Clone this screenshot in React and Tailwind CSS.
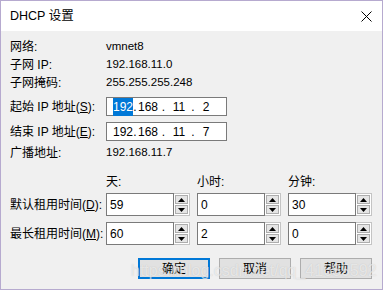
const font = { fontFamily: '"Liberation Sans", "Noto Sans CJK SC", sans-serif' };

const Arrow = ({ up }) => (
  <svg width="7" height="4" viewBox="0 0 7 4">
    <polygon points={up ? "3.5,0 7,4 0,4" : "0,0 7,0 3.5,4"} fill="#000" />
  </svg>
);

const SpinBox = ({ value }) => (
  <div className="flex h-full w-[84px]">
    <div className="flex h-full w-[68px] items-center border border-[#7a7a7a] bg-white pl-[3px] text-[12px]">
      {value}
    </div>
    <div className="flex h-full w-[16px] flex-col border border-l-0 border-[#c4c4c4] bg-white p-[1px] gap-[1px]">
      <div className="flex flex-1 items-center justify-center border border-[#adadad] bg-[#e5e5e5]">
        <Arrow up />
      </div>
      <div className="flex flex-1 items-center justify-center border border-[#adadad] bg-[#e5e5e5]">
        <Arrow />
      </div>
    </div>
  </div>
);

const Label = ({ children }) => (
  <div className="w-[96px] shrink-0 text-[12px] text-black">{children}</div>
);

const InfoRow = ({ label, value, className = "" }) => (
  <div className={`flex h-[18px] items-center ${className}`}>
    <Label>{label}</Label>
    <span className="text-[11.5px]">{value}</span>
  </div>
);

const IpBox = ({ parts, selected }) => (
  <div className="flex h-full w-[121px] shrink-0 items-center border border-[#7a7a7a] bg-white pl-[6px] text-[12px]">
    <span className={`w-[20px] text-center ${selected ? "bg-[#0078d7] text-white" : ""}`}>
      {parts[0]}
    </span>
    <span className="w-[4px] text-center">.</span>
    <span className="w-[22px] text-center">{parts[1]}</span>
    <span className="w-[9px] text-center">.</span>
    <span className="w-[22px] text-center">{parts[2]}</span>
    <span className="w-[6px] text-center">.</span>
    <span className="w-[20px] text-center">{parts[3]}</span>
  </div>
);

const Button = ({ children, focused }) => (
  <div
    className={`flex h-[21px] w-[72px] items-center justify-center bg-[#e1e1e1] text-[12px] ${
      focused ? "border-2 border-[#0078d7]" : "border border-[#adadad]"
    }`}
  >
    {children}
  </div>
);

export default function App() {
  return (
    <div
      className="relative flex h-[290px] w-[383px] flex-col border border-[#b6aacf] bg-[#f0f0f0] text-black"
      style={font}
    >
      {/* Title bar */}
      <div className="flex h-[30px] shrink-0 items-center justify-between bg-white pl-[9px] pr-[9px]">
        <span className="text-[12.5px]">DHCP 设置</span>
        <svg width="11" height="11" viewBox="0 0 11 11" className="mr-[1px]">
          <path d="M0.5 0.5 L10.5 10.5 M10.5 0.5 L0.5 10.5" stroke="#000" strokeWidth="1" />
        </svg>
      </div>

      {/* Body */}
      <div className="flex flex-1 flex-col pl-[9px] pt-[7px]">
        <InfoRow label="网络:" value="vmnet8" />
        <InfoRow label="子网 IP:" value="192.168.11.0" />
        <InfoRow label="子网掩码:" value="255.255.255.248" />

        <div className="mt-[5px] flex h-[19px] items-center">
          <Label>
            起始 IP 地址(<u>S</u>):
          </Label>
          <IpBox parts={["192", "168", "11", "2"]} selected />
        </div>
        <div className="mt-[6px] flex h-[19px] items-center">
          <Label>
            结束 IP 地址(<u>E</u>):
          </Label>
          <IpBox parts={["192", "168", "11", "7"]} />
        </div>

        <InfoRow label="广播地址:" value="192.168.11.7" className="mt-[3px]" />

        {/* Lease headers */}
        <div className="mt-[12px] flex h-[16px] items-center text-[12px]">
          <div className="w-[96px]" />
          <div className="flex gap-[7px]">
            <span className="w-[84px]">天:</span>
            <span className="w-[84px]">小时:</span>
            <span className="w-[84px]">分钟:</span>
          </div>
        </div>

        <div className="mt-[3px] flex h-[23px] items-center">
          <Label>
            默认租用时间(<u>D</u>):
          </Label>
          <div className="flex h-full gap-[7px]">
            <SpinBox value="59" />
            <SpinBox value="0" />
            <SpinBox value="30" />
          </div>
        </div>
        <div className="mt-[6px] flex h-[23px] items-center">
          <Label>
            最长租用时间(<u>M</u>):
          </Label>
          <div className="flex h-full gap-[7px]">
            <SpinBox value="60" />
            <SpinBox value="2" />
            <SpinBox value="0" />
          </div>
        </div>

        {/* Buttons */}
        <div className="mt-[13px] flex justify-end gap-[9px] pr-[10px]">
          <Button focused>确定</Button>
          <Button>取消</Button>
          <Button>帮助</Button>
        </div>
      </div>

      {/* watermark */}
      <div
        className="pointer-events-none absolute left-[130px] top-[258px] text-[16px] text-white/60 [text-shadow:0_0_1px_rgba(120,120,120,0.35)]"
        style={{ fontFamily: '"Liberation Sans", sans-serif' }}
      >
        https://blog.csdn.net/qq_41685592
      </div>
    </div>
  );
}
